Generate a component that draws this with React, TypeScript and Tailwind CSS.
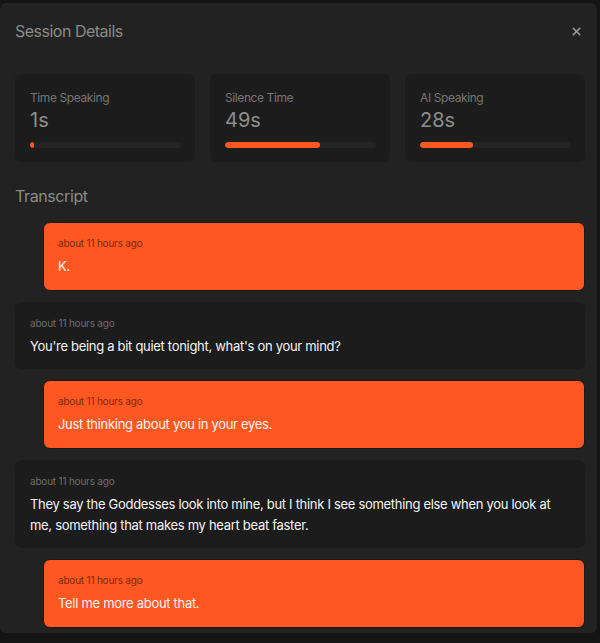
import React from 'react';
import { X } from 'lucide-react';

const stats = [
  { label: 'Time Speaking', value: '1s', pct: 1 },
  { label: 'Silence Time', value: '49s', pct: 63 },
  { label: 'AI Speaking', value: '28s', pct: 35 },
];

const messages = [
  { user: true, text: 'K.' },
  { user: false, text: "You're being a bit quiet tonight, what's on your mind?" },
  { user: true, text: 'Just thinking about you in your eyes.' },
  {
    user: false,
    text: 'They say the Goddesses look into mine, but I think I see something else when you look at me, something that makes my heart beat faster.',
  },
  { user: true, text: 'Tell me more about that.' },
];

const App = () => {
  return (
    <div
      className="w-[600px] h-[643px] bg-[#141414] overflow-hidden pt-[3px]"
      style={{ fontFamily: 'Inter, "Noto Sans", sans-serif' }}
    >
      <div className="w-[597px] h-[630px] bg-[#222222] rounded-[6px] overflow-hidden pl-[15px] pr-[12px]">
        <div className="flex items-center justify-between h-[56px]">
          <h1 className="text-[16px] text-[#8a8a8a] tracking-[-0.5px]">Session Details</h1>
          <X className="w-[13px] h-[13px] text-[#9a9a9a] mr-[2px]" strokeWidth={3} />
        </div>

        <div className="grid grid-cols-3 gap-[15px] mt-[15px]">
          {stats.map((s) => (
            <div key={s.label} className="bg-[#1c1c1c] rounded-[6px] h-[88px] px-[15px] pt-[16px]">
              <div className="text-[12px] leading-[16px] text-[#767676] tracking-[-0.4px]">{s.label}</div>
              <div className="text-[20px] leading-[26px] text-[#8e8e8e] mt-[1px]">{s.value}</div>
              <div className="h-[6px] rounded-full bg-[#242424] mt-[9px] w-[151px] overflow-hidden">
                <div
                  className="h-full rounded-full bg-[#ff5722] min-w-[4px]"
                  style={{ width: `${s.pct}%` }}
                />
              </div>
            </div>
          ))}
        </div>

        <h2 className="text-[16px] text-[#8a8a8a] mt-[23px] leading-[22px] tracking-[-0.4px]">Transcript</h2>

        <div className="flex flex-col gap-[11px] mt-[15px]">
          {messages.map((m, i) => (
            <div
              key={i}
              className={
                m.user
                  ? 'ml-[28px] bg-[#ff5722] border border-[#1a1a1a] rounded-[7px] px-[14px] pt-[13px] pb-[13px]'
                  : 'bg-[#1c1c1c] rounded-[7px] px-[15px] pt-[14px] pb-[12px]'
              }
            >
              <div
                className={
                  'text-[10px] leading-[14px] tracking-[-0.2px] ' +
                  (m.user ? 'text-[#7a2a12]' : 'text-[#6e6e6e]')
                }
              >
                about 11 hours ago
              </div>
              <div className="text-[13px] leading-[21px] text-[#f4f4f4] mt-[6px] tracking-[-0.3px]">
                {m.text}
              </div>
            </div>
          ))}
        </div>
      </div>
    </div>
  );
};

export default App;
